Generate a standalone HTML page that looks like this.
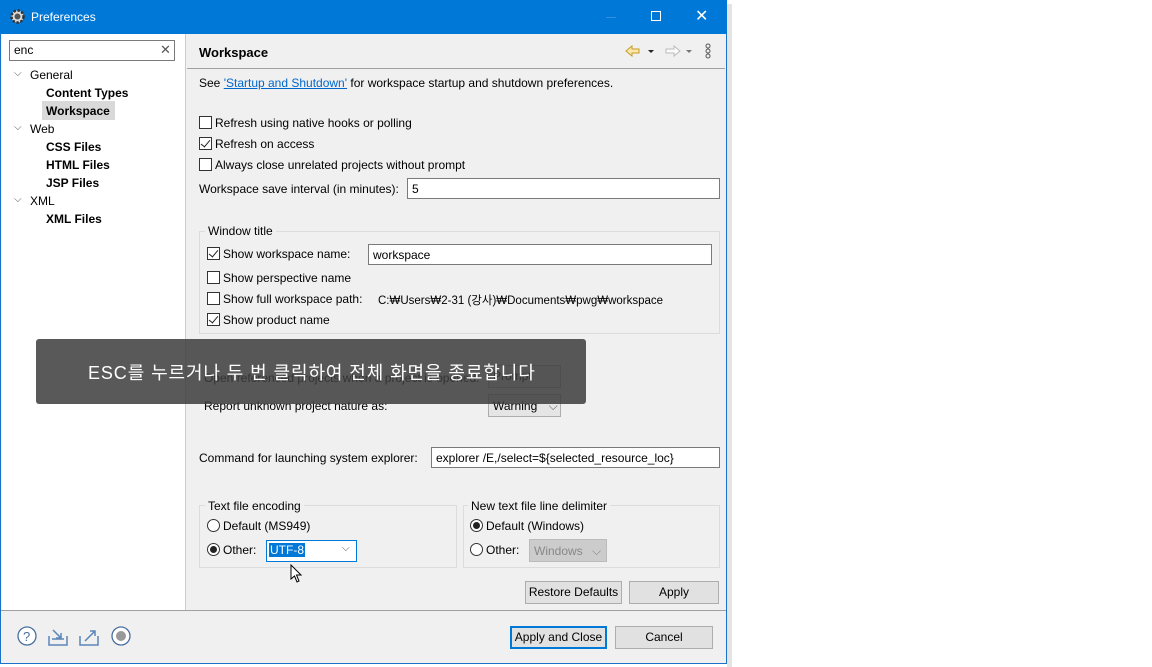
<!DOCTYPE html>
<html><head><meta charset="utf-8"><style>
*{box-sizing:border-box;margin:0;padding:0}
body{width:1152px;height:667px;background:#fff;font-family:"Liberation Sans","Noto Sans CJK KR",sans-serif;font-size:12px;color:#000;position:relative;overflow:hidden}
.a{position:absolute;white-space:nowrap}
.cb{position:absolute;width:13px;height:13px;border:1px solid #333;background:#fff}
.cb.on::after{content:"";position:absolute;left:3px;top:0px;width:4px;height:8px;border:solid #222;border-width:0 1.5px 1.5px 0;transform:rotate(40deg)}
.rb{position:absolute;width:13px;height:13px;border:1px solid #333;border-radius:50%;background:#fff}
.rb.on::after{content:"";position:absolute;left:2px;top:2px;width:7px;height:7px;border-radius:50%;background:#222}
.inp{position:absolute;background:#fff;border:1px solid #7a7a7a;height:21px;padding:3px 4px}
.grp{position:absolute;border:1px solid #dcdcdc}
.btn{position:absolute;background:#e1e1e1;border:1px solid #adadad;text-align:center;height:23px;line-height:21px}
.tree{position:absolute;left:46px}
.b{font-weight:bold}
</style></head><body>
<div class="a" style="left:727px;top:4px;width:5px;height:663px;background:#e4e4e4"></div>
<div class="a" style="left:0;top:0;width:727px;height:664px;background:#f0f0f0;border:1px solid #1a73c8"></div>
<div class="a" style="left:0;top:0;width:727px;height:34px;background:#0078d7"></div>
<svg class="a" style="left:9px;top:8px" width="17" height="17" viewBox="0 0 17 17"><circle cx="8.5" cy="8.5" r="6" fill="#ddd" stroke="#333" stroke-width="2.5" stroke-dasharray="2.5 1.5"/><circle cx="8.5" cy="8.5" r="3" fill="#555"/></svg>
<div class="a" style="left:31px;top:10px;color:#fff;font-size:12px">Preferences</div>
<div class="a" style="left:606px;top:17px;width:10px;height:1px;background:#3a8fdc"></div>
<div class="a" style="left:651px;top:11px;width:10px;height:10px;border:1px solid #fff"></div>
<div class="a" style="left:695px;top:6px;color:#fff;font-size:16px">✕</div>
<!-- left pane -->
<div class="a" style="left:2px;top:34px;width:184px;height:576px;background:#fff;border-right:1px solid #ccc"></div>
<div class="inp" style="left:9px;top:40px;width:166px;height:21px;padding:2px 4px">enc</div>
<div class="a" style="left:160px;top:42px;color:#555;font-size:13px">✕</div>
<div class="a" style="left:14px;top:68px;color:#555;font-size:10px">⌵</div><div class="a" style="left:30px;top:68px">General</div>
<div class="tree b" style="top:86px">Content Types</div>
<div class="a" style="left:42px;top:101px;width:73px;height:19px;background:#d9d9d9"></div>
<div class="tree b" style="top:104px">Workspace</div>
<div class="a" style="left:14px;top:122px;color:#555;font-size:10px">⌵</div><div class="a" style="left:30px;top:122px">Web</div>
<div class="tree b" style="top:140px">CSS Files</div>
<div class="tree b" style="top:158px">HTML Files</div>
<div class="tree b" style="top:176px">JSP Files</div>
<div class="a" style="left:14px;top:194px;color:#555;font-size:10px">⌵</div><div class="a" style="left:30px;top:194px">XML</div>
<div class="tree b" style="top:212px">XML Files</div>
<!-- right -->
<div class="a b" style="left:199px;top:45px;font-size:13px">Workspace</div>
<div class="a" style="left:187px;top:68px;width:538px;height:1px;background:#a0a0a0"></div>
<svg class="a" style="left:624px;top:43px" width="95" height="16"><path d="M2 8 L8 3 V6 H15 V10 H8 V13 Z" fill="#fde8a8" stroke="#c89a2a"/><path d="M24 7 h6 l-3 3z" fill="#222"/><path d="M56 8 L50 3 V6 H42 V10 H50 V13 Z" fill="#fafafa" stroke="#bbb"/><path d="M62 7 h6 l-3 3z" fill="#777"/><circle cx="84" cy="3" r="2" fill="none" stroke="#555"/><circle cx="84" cy="8" r="2" fill="none" stroke="#555"/><circle cx="84" cy="13" r="2" fill="none" stroke="#555"/></svg>
<div class="a" style="left:199px;top:76px">See <span style="color:#0066cc;text-decoration:underline">'Startup and Shutdown'</span> for workspace startup and shutdown preferences.</div>
<div class="cb" style="left:199px;top:116px"></div><div class="a" style="left:215px;top:116px">Refresh using native hooks or polling</div>
<div class="cb on" style="left:199px;top:137px"></div><div class="a" style="left:215px;top:137px">Refresh on access</div>
<div class="cb" style="left:199px;top:158px"></div><div class="a" style="left:215px;top:158px">Always close unrelated projects without prompt</div>
<div class="a" style="left:199px;top:182px">Workspace save interval (in minutes):</div>
<div class="inp" style="left:407px;top:178px;width:313px">5</div>
<div class="grp" style="left:199px;top:231px;width:521px;height:103px"></div>
<div class="a" style="left:205px;top:224px;background:#f0f0f0;padding:0 3px">Window title</div>
<div class="cb on" style="left:207px;top:247px"></div><div class="a" style="left:223px;top:247px">Show workspace name:</div>
<div class="inp" style="left:368px;top:244px;width:344px">workspace</div>
<div class="cb" style="left:207px;top:271px"></div><div class="a" style="left:223px;top:271px">Show perspective name</div>
<div class="cb" style="left:207px;top:292px"></div><div class="a" style="left:223px;top:292px">Show full workspace path:</div>
<div class="a" style="left:378px;top:292px;font-size:11.5px">C:₩Users₩2-31 (강사)₩Documents₩pwg₩workspace</div>
<div class="cb on" style="left:207px;top:313px"></div><div class="a" style="left:223px;top:313px">Show product name</div>
<div class="a" style="left:204px;top:371px">Open referenced projects when a project is opened:</div>
<div class="a" style="left:488px;top:365px;width:73px;height:23px;background:#e5e5e5;border:1px solid #adadad;padding:3px 4px">Prompt</div>
<div class="a" style="left:204px;top:399px">Report unknown project nature as:</div>
<div class="a" style="left:488px;top:394px;width:73px;height:23px;background:#e5e5e5;border:1px solid #adadad;padding:4px 4px">Warning <span style="margin-left:8px;color:#666">⌵</span></div>
<div class="a" style="left:199px;top:451px">Command for launching system explorer:</div>
<div class="inp" style="left:431px;top:447px;width:289px">explorer /E,/select=${selected_resource_loc}</div>
<div class="grp" style="left:199px;top:505px;width:258px;height:63px"></div>
<div class="a" style="left:205px;top:499px;background:#f0f0f0;padding:0 3px">Text file encoding</div>
<div class="rb" style="left:207px;top:519px"></div><div class="a" style="left:223px;top:519px">Default (MS949)</div>
<div class="rb on" style="left:207px;top:543px"></div><div class="a" style="left:223px;top:543px">Other:</div>
<div class="a" style="left:266px;top:540px;width:91px;height:22px;background:#fff;border:1px solid #0078d7"></div>
<div class="a" style="left:269px;top:543px;background:#0078d7;color:#fff;padding:0 1px">UTF-8</div>
<div class="a" style="left:342px;top:543px;color:#555;font-size:10px">⌵</div>
<div class="grp" style="left:463px;top:505px;width:257px;height:63px"></div>
<div class="a" style="left:468px;top:499px;background:#f0f0f0;padding:0 3px">New text file line delimiter</div>
<div class="rb on" style="left:470px;top:519px"></div><div class="a" style="left:486px;top:519px">Default (Windows)</div>
<div class="rb" style="left:470px;top:543px"></div><div class="a" style="left:486px;top:543px">Other:</div>
<div class="a" style="left:529px;top:539px;width:78px;height:23px;background:#ccc;border:1px solid #bbb;color:#888;padding:4px 4px">Windows <span style="margin-left:6px">⌵</span></div>
<svg class="a" style="left:290px;top:564px" width="14" height="20"><path d="M1 1 V15 L4.5 12 L7 18 L9 17 L6.5 11 H11 Z" fill="#fff" stroke="#000"/></svg>
<div class="btn" style="left:525px;top:581px;width:97px">Restore Defaults</div>
<div class="btn" style="left:629px;top:581px;width:90px">Apply</div>
<div class="a" style="left:1px;top:610px;width:725px;height:1px;background:#a0a0a0"></div>
<svg class="a" style="left:17px;top:626px" width="118" height="22"><circle cx="10" cy="10" r="9" fill="#fff" stroke="#4a6fa0" stroke-width="1.3"/><text x="6" y="15" font-size="13" font-family="Liberation Sans" fill="#4a6fa0">?</text><path d="M32 10 V19 H50 V10 M35 13 H47" fill="none" stroke="#5b86b8" stroke-width="1.5"/><path d="M36 4 L44 12 M44 7 V12 H39" fill="none" stroke="#5b86b8" stroke-width="1.5"/><path d="M63 10 V19 H81 V10" fill="none" stroke="#5b86b8" stroke-width="1.5"/><path d="M68 15 L78 5 M73 5 H78 V10" fill="none" stroke="#5b86b8" stroke-width="1.5"/><circle cx="104" cy="10" r="9" fill="#fff" stroke="#4a6fa0" stroke-width="1.3"/><circle cx="104" cy="10" r="5" fill="#999"/></svg>
<div class="btn" style="left:510px;top:626px;width:97px;border:2px solid #0078d7;line-height:19px">Apply and Close</div>
<div class="btn" style="left:615px;top:626px;width:98px">Cancel</div>
<!-- overlay -->
<div class="a" style="left:36px;top:339px;width:550px;height:65px;background:rgba(60,60,60,0.85);border-radius:3px"></div>
<div class="a" style="left:88px;top:359px;color:#fff;font-size:18px;letter-spacing:0.9px">ESC를 누르거나 두 번 클릭하여 전체 화면을 종료합니다</div>
</body></html>
